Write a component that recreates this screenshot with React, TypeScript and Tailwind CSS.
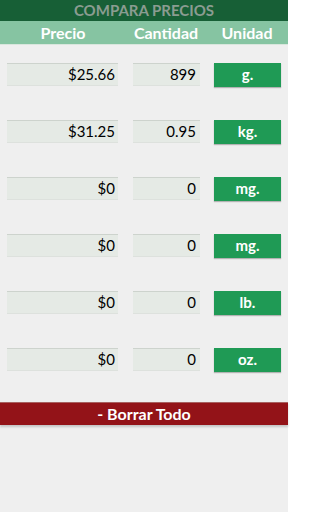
import React from "react";

const rows = [
  { price: "$25.66", qty: "899", unit: "g." },
  { price: "$31.25", qty: "0.95", unit: "kg." },
  { price: "$0", qty: "0", unit: "mg." },
  { price: "$0", qty: "0", unit: "mg." },
  { price: "$0", qty: "0", unit: "lb." },
  { price: "$0", qty: "0", unit: "oz." },
];

export default function App() {
  return (
    <div
      className="w-[288px] h-[512px] bg-[#efefef] flex flex-col"
      style={{ fontFamily: "Lato, 'Open Sans', sans-serif" }}
    >
      <div className="h-[21px] bg-[#175f36] flex items-center justify-center text-[15px] font-bold text-[#8a9c91] leading-none">
        COMPARA PRECIOS
      </div>
      <div className="h-[24px] bg-[#86c4a2] flex items-center text-[16px] font-bold text-white leading-none border-b border-[#d9e6dd]">
        <div className="w-[126px] text-center">Precio</div>
        <div className="w-[80px] text-center">Cantidad</div>
        <div className="w-[82px] text-center">Unidad</div>
      </div>
      <div className="flex flex-col gap-[34px] pt-[18px]">
        {rows.map((r, i) => (
          <div key={i} className="flex items-center h-[23px] pl-[7px]">
            <div className="w-[111px] h-[23px] bg-[#e5eae5] border-t border-[#cdd3cd] border-b border-b-[#dde1dd] flex items-center justify-end pr-[3px] text-[15px] text-black">
              {r.price}
            </div>
            <div className="w-[67px] h-[23px] ml-[15px] bg-[#e5eae5] border-t border-[#cdd3cd] border-b border-b-[#dde1dd] flex items-center justify-end pr-[4px] text-[15px] text-black">
              {r.qty}
            </div>
            <div className="w-[67px] h-[24px] ml-[14px] bg-[#1f9a55] shadow-[0_1px_1px_rgba(0,0,0,0.25)] flex items-center justify-center text-[15px] font-bold text-white">
              {r.unit}
            </div>
          </div>
        ))}
      </div>
      <div className="mt-[31px] h-[23px] bg-[#931318] border-t border-[#a8605f] shadow-[0_2px_2px_rgba(0,0,0,0.18)] flex items-center justify-center text-[16px] font-bold text-white">
        - Borrar Todo
      </div>
    </div>
  );
}
